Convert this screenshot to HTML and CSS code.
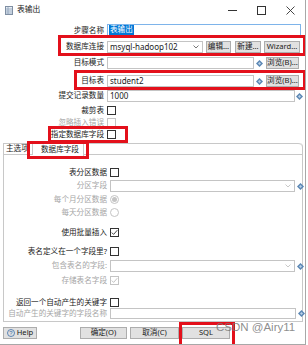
FILE: index.html
```html
<!DOCTYPE html>
<html>
<head>
<meta charset="utf-8">
<link rel="stylesheet" href="styles.css">
</head>
<body>
<div class="win">
  <div class="titlebar">
    <svg class="appicon" width="8" height="9" viewBox="0 0 8 9"><rect x="0.5" y="0.5" width="7" height="8" fill="#e8eef5" stroke="#7f8fa3"/><path d="M1 3h6M1 5h6M1 7h6M3 1v7" stroke="#8aa0b8" stroke-width="0.8"/></svg>
    <span class="title">表输出</span>
    <div class="wctl">
      <svg width="9" height="9" viewBox="0 0 9 9"><path d="M0 4.5h9" stroke="#333" stroke-width="1"/></svg>
      <svg width="9" height="9" viewBox="0 0 9 9"><rect x="0.5" y="0.5" width="8" height="8" fill="none" stroke="#333"/></svg>
      <svg width="9" height="9" viewBox="0 0 9 9"><path d="M0.5 0.5l8 8M8.5 0.5l-8 8" stroke="#333" stroke-width="0.9"/></svg>
    </div>
  </div>

  <div class="form">
    <div class="row r1"><span class="lbl">步骤名称</span><div class="input focus w194"><span class="sel">表输出</span></div></div>
    <div class="row r2"><span class="lbl">数据库连接</span><div class="input combo w96">msyql-hadoop102<svg class="chev" width="6" height="4" viewBox="0 0 6 4"><path d="M0.5 0.5l2.5 2.5 2.5-2.5" fill="none" stroke="#555" stroke-width="0.8"/></svg></div><span class="btn b25">编辑...</span><span class="btn b26">新建...</span><span class="btn b36">Wizard...</span></div>
    <div class="row r3"><span class="lbl">目标模式</span><div class="input w147"></div><svg class="var" width="7" height="7" viewBox="0 0 7 7"><path d="M3.5 0L7 3.5 3.5 7 0 3.5z" fill="#5b87b4"/><path d="M3.5 2L5 3.5 3.5 5 2 3.5z" fill="#b9d0e6"/></svg><span class="btn b33">浏览(B)...</span></div>
    <div class="row r4"><span class="lbl">目标表</span><div class="input w147">student2</div><svg class="var" width="7" height="7" viewBox="0 0 7 7"><path d="M3.5 0L7 3.5 3.5 7 0 3.5z" fill="#5b87b4"/><path d="M3.5 2L5 3.5 3.5 5 2 3.5z" fill="#b9d0e6"/></svg><span class="btn b33">浏览(B)...</span></div>
    <div class="row r5"><span class="lbl">提交记录数量</span><div class="input w188">1000</div><svg class="var v1" width="7" height="7" viewBox="0 0 7 7"><path d="M3.5 0L7 3.5 3.5 7 0 3.5z" fill="#5b87b4"/><path d="M3.5 2L5 3.5 3.5 5 2 3.5z" fill="#b9d0e6"/></svg></div>
    <div class="row r6"><span class="lbl">裁剪表</span><span class="cb"></span></div>
    <div class="row r7 dis"><span class="lbl">忽略插入错误</span><span class="cb"></span></div>
    <div class="row r8"><span class="lbl">指定数据库字段</span><span class="cb"></span></div>
  </div>

  <div class="folder">
    <div class="tabhead">
      <span class="tab t1">主选项</span><span class="tab t2">数据库字段</span>
    </div>
    <div class="panel">
      <div class="row p1"><span class="lbl">表分区数据</span><span class="cb"></span></div>
      <div class="row p2 dis"><span class="lbl">分区字段</span><div class="input combo w185"><svg class="chev" width="6" height="4" viewBox="0 0 6 4"><path d="M0.5 0.5l2.5 2.5 2.5-2.5" fill="none" stroke="#bbb" stroke-width="0.8"/></svg></div><svg class="var" width="7" height="7" viewBox="0 0 7 7"><path d="M3.5 0L7 3.5 3.5 7 0 3.5z" fill="#5b87b4"/><path d="M3.5 2L5 3.5 3.5 5 2 3.5z" fill="#b9d0e6"/></svg></div>
      <div class="row p3 dis"><span class="lbl">每个月分区数据</span><span class="rb on"></span></div>
      <div class="row p4 dis"><span class="lbl">每天分区数据</span><span class="rb"></span></div>
      <div class="row p5"><span class="lbl">使用批量插入</span><span class="cb"><svg width="7" height="7" viewBox="0 0 7 7"><path d="M0.8 3.6l1.8 1.8L6.3 1.2" fill="none" stroke="#333" stroke-width="0.9"/></svg></span></div>
      <div class="row p6"><span class="lbl">表名定义在一个字段里?</span><span class="cb"></span></div>
      <div class="row p7 dis"><span class="lbl">包含表名的字段:</span><div class="input combo w185"><svg class="chev" width="6" height="4" viewBox="0 0 6 4"><path d="M0.5 0.5l2.5 2.5 2.5-2.5" fill="none" stroke="#bbb" stroke-width="0.8"/></svg></div><svg class="var" width="7" height="7" viewBox="0 0 7 7"><path d="M3.5 0L7 3.5 3.5 7 0 3.5z" fill="#5b87b4"/><path d="M3.5 2L5 3.5 3.5 5 2 3.5z" fill="#b9d0e6"/></svg></div>
      <div class="row p8 dis"><span class="lbl">存储表名字段</span><span class="cb"><svg width="7" height="7" viewBox="0 0 7 7"><path d="M0.8 3.6l1.8 1.8L6.3 1.2" fill="none" stroke="#bbb" stroke-width="0.9"/></svg></span></div>
      <div class="row p9"><span class="lbl">返回一个自动产生的关键字</span><span class="cb"></span></div>
      <div class="row p10 dis"><span class="lbl">自动产生的关键字的字段名称</span><div class="input w186"></div><svg class="var" width="7" height="7" viewBox="0 0 7 7"><path d="M3.5 0L7 3.5 3.5 7 0 3.5z" fill="#5b87b4"/><path d="M3.5 2L5 3.5 3.5 5 2 3.5z" fill="#b9d0e6"/></svg></div>
    </div>
  </div>

  <div class="bottom">
    <span class="btn help"><svg width="8" height="8" viewBox="0 0 8 8"><circle cx="4" cy="4" r="3.5" fill="none" stroke="#3d6fa8" stroke-width="0.8"/><text x="4" y="6.2" font-size="6" text-anchor="middle" fill="#3d6fa8" font-family="Liberation Sans, sans-serif">?</text></svg>Help</span>
    <span class="btn ok">确定(O)</span>
    <span class="btn cancel">取消(C)</span>
    <span class="btn sql">SQL</span>
  </div>

  <div class="anno a1"></div>
  <div class="anno a2"></div>
  <div class="anno a3"></div>
  <div class="anno a4"></div>
  <div class="anno a5"></div>
  <div class="watermark">CSDN @Airy11</div>
</div>
</body>
</html>
```

FILE: styles.css
```css
* { box-sizing: border-box; }
html, body { margin: 0; padding: 0; background: #ffffff; }
body {
  font-family: "Noto Sans", "Noto Sans CJK SC", sans-serif;
  font-size: 7.6px;
  color: #1a1a1a;
  line-height: 1;
}
.win {
  position: relative;
  width: 306px;
  height: 345px;
  border-right: 1px solid #a8a8a8;
  border-bottom: 1px solid #a8a8a8;
  background: #fff;
  overflow: hidden;
}
.titlebar {
  height: 20px;
  display: flex;
  align-items: center;
  padding-left: 5px;
}
.appicon { margin-right: 4px; }
.title { font-size: 7.8px; color: #222; }
.wctl {
  margin-left: auto;
  display: flex;
  gap: 20px;
  padding-right: 10px;
}
.row {
  display: flex;
  align-items: center;
}
.lbl {
  width: 107px;
  text-align: right;
  padding-right: 3px;
  white-space: nowrap;
  flex: none;
}
.panel .lbl { width: 106px; }
.dis { color: #a6a6a6; }
.input {
  height: 100%;
  border: 1px solid #c4c4c4;
  background: #fff;
  display: flex;
  align-items: center;
  padding-left: 2px;
  flex: none;
  color: #1a1a1a;
  font-size: 8px;
}
.input.focus { border-color: #7eb4ea; padding-left: 1px; }
.sel { background: #0078d7; color: #fff; padding: 1px 1px 2px; font-size: 7.6px; }
.combo { position: relative; }
.chev { position: absolute; right: 3px; top: 50%; margin-top: -2px; }
.w194 { width: 194px; }
.w96 { width: 96px; }
.w147 { width: 147px; }
.w188 { width: 188px; }
.w185 { width: 185px; }
.w186 { width: 186px; }
.btn {
  height: 100%;
  background: #e1e1e1;
  border: 1px solid #adadad;
  display: flex;
  align-items: center;
  justify-content: center;
  flex: none;
  color: #1a1a1a;
  white-space: nowrap;
}
.b25 { width: 25px; margin-left: 3px; }
.b26 { width: 26px; margin-left: 4px; }
.b36 { width: 36px; margin-left: 3px; }
.b33 { width: 33px; margin-left: 3px; }
.var { margin-left: 2px; flex: none; }
.v1 { margin-left: 1px; }
.cb {
  width: 9px; height: 9px;
  border: 1px solid #333;
  background: #fff;
  display: flex; align-items: center; justify-content: center;
  flex: none;
}
.dis .cb { border-color: #c4c4c4; }
.rb {
  width: 9px; height: 9px;
  border: 1px solid #c4c4c4;
  border-radius: 50%;
  display: flex; align-items: center; justify-content: center;
  flex: none;
}
.rb.on::after {
  content: "";
  width: 5px; height: 5px;
  border-radius: 50%;
  background: #c4c4c4;
}
.r1 { margin-top: 4px; height: 13px; }
.r2 { margin-top: 4px; height: 12px; }
.r3 { margin-top: 4px; height: 12px; }
.r4 { margin-top: 6px; height: 12px; }
.r5 { margin-top: 3px; height: 12px; }
.r6 { margin-top: 3px; height: 11px; }
.r7 { margin-top: 1px; height: 11px; }
.r8 { margin-top: 1px; height: 11px; }
.folder {
  margin: 3px 0 0 3px;
  width: 300px;
  border: 1px solid #c8c8c8;
  border-top: none;
  border-top-right-radius: 4px;
  position: relative;
}
.tabhead {
  height: 12px;
  display: flex;
  border-top: 1px solid #c8c8c8;
  border-top-right-radius: 4px;
  border-bottom: 1px solid #c8c8c8;
  position: relative;
}
.tab {
  height: 100%;
  display: flex;
  align-items: center;
  white-space: nowrap;
}
.t1 { width: 29px; padding-left: 2px; border-right: 1px solid #c8c8c8; transform-origin: top; }
.t2 { width: 51px; padding-left: 8px; background: #fff; margin-bottom: -1px; height: 12px; border-right: 1px solid #c8c8c8; }
.panel { padding-bottom: 2px; }
.p1 { margin-top: 12px; height: 11px; }
.p2 { margin-top: 2px; height: 12px; }
.p3 { margin-top: 2px; height: 11px; }
.p4 { margin-top: 2px; height: 11px; }
.p5 { margin-top: 9px; height: 11px; }
.p6 { margin-top: 8px; height: 11px; }
.p7 { margin-top: 3px; height: 12px; }
.p8 { margin-top: 3px; height: 11px; }
.p9 { margin-top: 11px; height: 11px; }
.p10 { margin-top: 0; height: 11px; }
.bottom {
  margin-top: 5px;
  height: 12px;
  display: flex;
  padding-left: 3px;
}
.help { width: 34px; gap: 2px; }
.ok { width: 47px; margin-left: 43px; }
.cancel { width: 49px; margin-left: 3px; }
.sql { width: 48px; margin-left: 3px; }
.anno {
  position: absolute;
  border: 3px solid #e3101b;
}
.a1 { left: 58px; top: 35px; width: 248px; height: 21px; }
.a2 { left: 74px; top: 70px; width: 232px; height: 20px; }
.a3 { left: 48px; top: 126px; width: 80px; height: 17px; }
.a4 { left: 27px; top: 141px; width: 62px; height: 18px; }
.a5 { left: 179px; top: 322px; width: 56px; height: 26px; }
.watermark {
  position: absolute;
  left: 216px;
  top: 322px;
  font-family: "Liberation Sans", sans-serif;
  font-size: 11.5px;
  color: rgba(120,120,120,0.85);
  white-space: nowrap;
}
```
